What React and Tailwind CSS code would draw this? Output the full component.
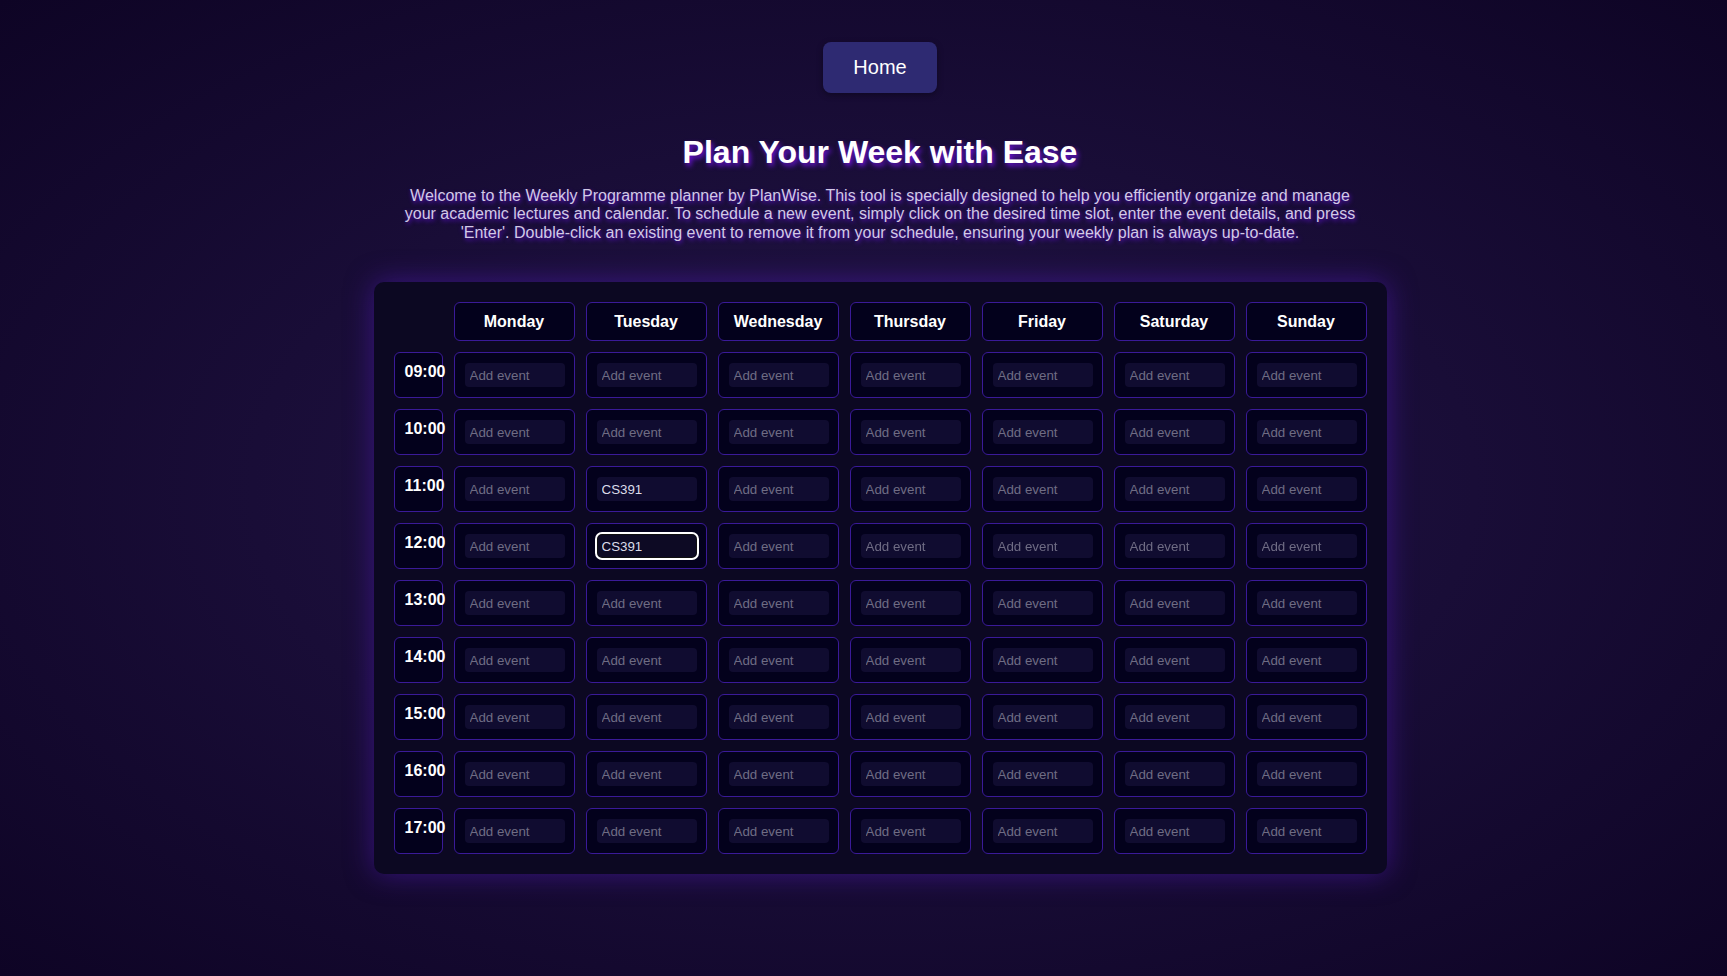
import {useState} from "react";

const days = ["Monday", "Tuesday", "Wednesday", "Thursday", "Friday", "Saturday", "Sunday"];
const times = ["09:00", "10:00", "11:00", "12:00", "13:00", "14:00", "15:00", "16:00", "17:00"];

export default function App() {
    const [events, setEvents] = useState({
        "Tuesday-11:00": "CS391",
        "Tuesday-12:00": "CS391",
    });
    const [drafts, setDrafts] = useState({});

    // enter saves the event, double-click removes it
    const handleKey = (key, e) => {
        if (e.key === "Enter") {
            setEvents({...events, [key]: e.target.value});
        }
    };

    const removeEvent = (key) => {
        const copy = {...events};
        delete copy[key];
        setEvents(copy);
        setDrafts({...drafts, [key]: ""});
    };

    return (
        <div
            className="min-h-screen w-full bg-[radial-gradient(ellipse_at_center,#241649_0%,#0e0425_100%)] pt-[42px] pb-[60px] pl-[33px] text-white"
            style={{fontFamily: '"Liberation Sans", Arial, sans-serif'}}
        >
            <div className="flex flex-col items-center">
                <button className="rounded-[8px] bg-[#2e2a72] px-[30px] py-[14px] text-[20px] leading-[23px] text-white shadow-[0_2px_6px_rgba(0,0,0,0.35)] hover:bg-[#3a3590]">
                    Home
                </button>

                <h1 className="mt-[41px] text-[32px] leading-[37px] font-bold text-white [text-shadow:2px_3px_5px_#6a14d6]">
                    Plan Your Week with Ease
                </h1>
                <p className="mt-[16px] w-[960px] text-center text-[16px] leading-[18.4px] text-[#d2c9e6] [text-shadow:1px_2px_4px_#5a12c8]">
                    Welcome to the Weekly Programme planner by PlanWise. This tool is specially designed to help you efficiently organize and manage your academic lectures and calendar. To schedule a new event, simply click on the desired time slot, enter the event details, and press 'Enter'. Double-click an existing event to remove it from your schedule, ensuring your weekly plan is always up-to-date.
                </p>

                <div className="mt-[40px] rounded-[10px] bg-[#0c0822] p-[20px] shadow-[0_0_28px_rgba(88,28,200,0.5)]">
                    <div className="grid grid-cols-[49px_repeat(7,121px)] grid-rows-[39px_repeat(9,46px)] gap-[11px]">
                        <div></div>
                        {days.map(day => (
                            <div key={day} className="flex items-center justify-center rounded-[6px] border border-[#3a1a98] bg-[#03011c] text-[16px] font-bold">
                                {day}
                            </div>
                        ))}

                        {times.map(time => (
                            <>
                                <div key={time} className="whitespace-nowrap rounded-[6px] border border-[#3a1a98] bg-[#03011c] pl-[10px] pt-[7px] text-[16px] font-bold">
                                    {time}
                                </div>
                                {days.map(day => {
                                    const key = `${day}-${time}`;
                                    const focused = key === "Tuesday-12:00";
                                    return (
                                        <div key={key} className="flex items-center rounded-[6px] border border-[#3a1a98] bg-[#03011c] pl-[10px]">
                                            <input
                                                type="text"
                                                placeholder="Add event"
                                                defaultValue={events[key] || ""}
                                                onKeyDown={(e) => handleKey(key, e)}
                                                onDoubleClick={() => removeEvent(key)}
                                                autoFocus={focused}
                                                className={
                                                    focused
                                                        ? "h-[24px] w-[100px] rounded-[5px] bg-[#0d0a24] px-[5px] text-[13.33px] text-[#dcdcea] placeholder:text-[#6f6c84] outline-2 outline-white shadow-[inset_0_0_0_1px_#101010]"
                                                        : "h-[24px] w-[100px] rounded-[4px] bg-[#100c30] px-[5px] text-[13.33px] text-[#dcdcea] placeholder:text-[#6f6c84] focus:outline-2 focus:outline-white"
                                                }
                                            />
                                        </div>
                                    );
                                })}
                            </>
                        ))}
                    </div>
                </div>
            </div>
        </div>
    );
}
